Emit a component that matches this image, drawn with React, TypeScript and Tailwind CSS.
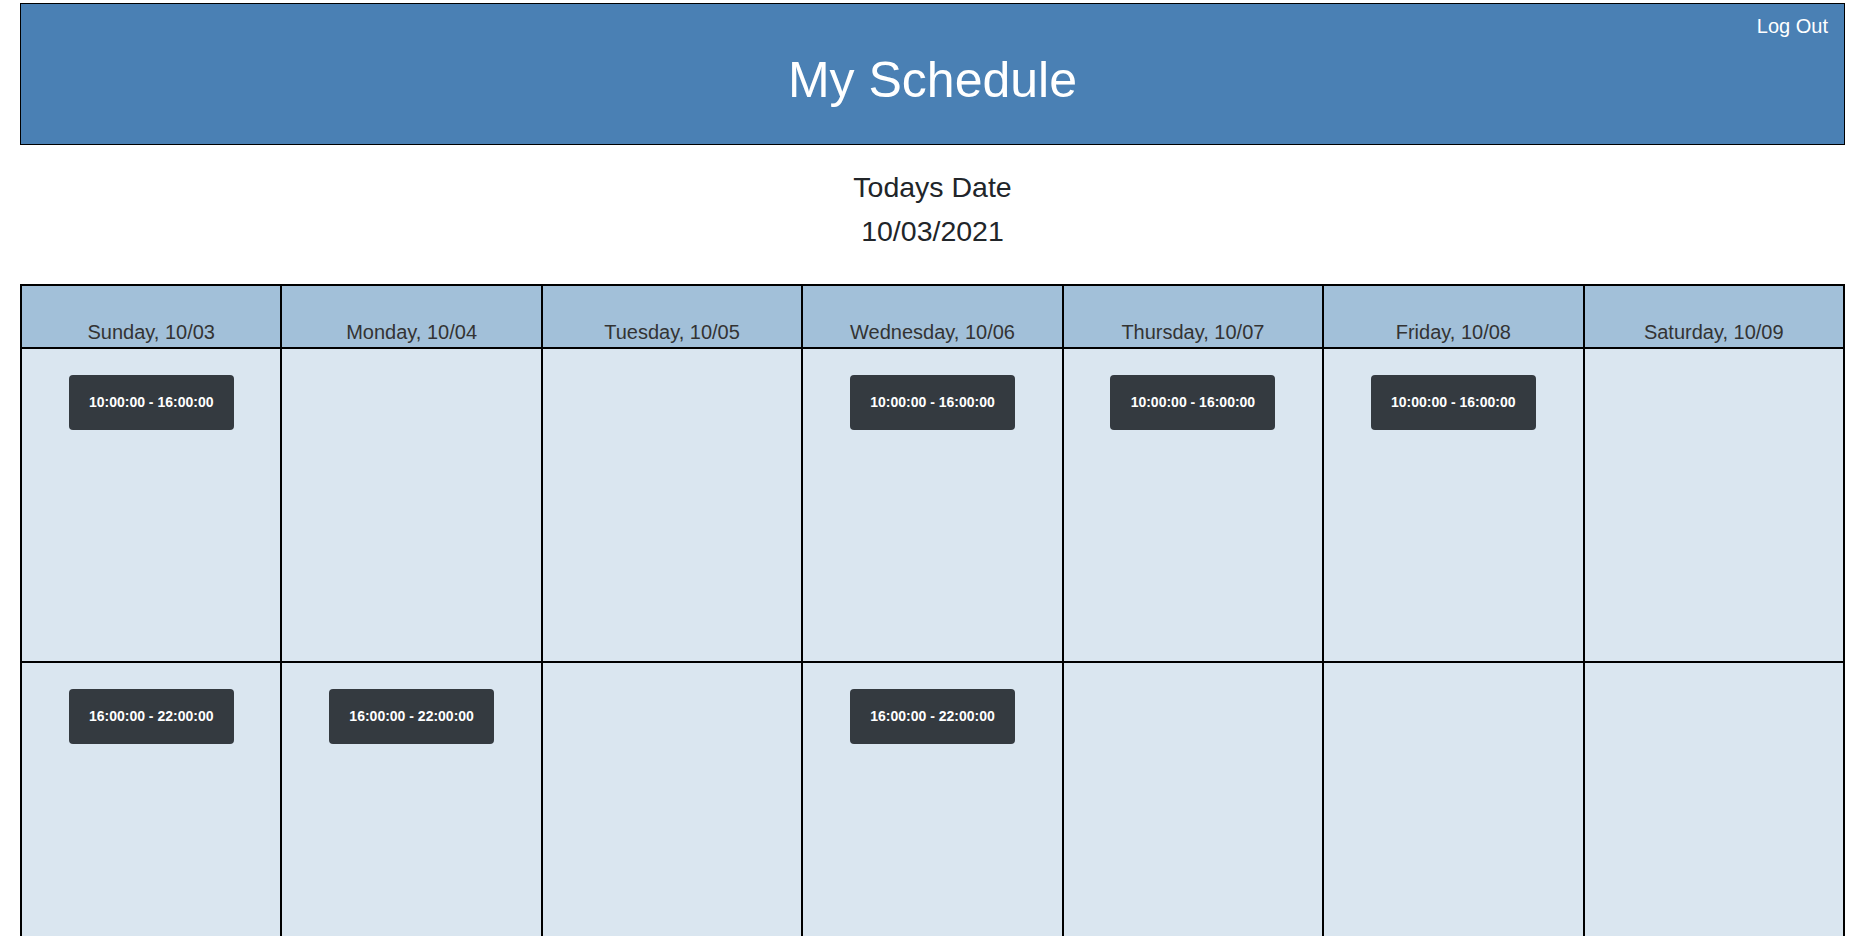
const days = [
  'Sunday, 10/03',
  'Monday, 10/04',
  'Tuesday, 10/05',
  'Wednesday, 10/06',
  'Thursday, 10/07',
  'Friday, 10/08',
  'Saturday, 10/09',
]

// shifts per row, indexed by day
const rows: (string | null)[][] = [
  ['10:00:00 - 16:00:00', null, null, '10:00:00 - 16:00:00', '10:00:00 - 16:00:00', '10:00:00 - 16:00:00', null],
  ['16:00:00 - 22:00:00', '16:00:00 - 22:00:00', null, '16:00:00 - 22:00:00', null, null, null],
]

export default function App() {
  return (
    <div className="min-h-screen bg-white pl-[20px] pr-[15px] pt-[3px] font-['Liberation_Sans',Arial,sans-serif]">
      {/* Cabeçalho */}
      <header className="relative flex h-[142px] items-center justify-center border border-black bg-[#4a80b4] pt-[12px]">
        <h1 className="text-[50px] leading-[58px] text-white">My Schedule</h1>
        <button className="absolute right-[16px] top-[11px] text-[20px] leading-[23px] text-white">Log Out</button>
      </header>

      <div className="mt-[20px] text-center text-[28.5px] leading-[44px] text-[#212529]">
        <p>Todays Date</p>
        <p>10/03/2021</p>
      </div>

      <table className="mt-[31px] w-full table-fixed border-collapse border-2 border-black">
        <thead>
          <tr>
            {days.map((d) => (
              <th
                key={d}
                className="h-[63px] border-2 border-black bg-[#a2c0d9] pb-[4px] align-bottom text-[20px] font-normal leading-[22px] text-[#333]"
              >
                {d}
              </th>
            ))}
          </tr>
        </thead>
        <tbody>
          {rows.map((row, i) => (
            <tr key={i}>
              {row.map((shift, j) => (
                <td key={j} className="h-[314px] border-2 border-black bg-[#dae6f0] pt-[26px] align-top">
                  {shift && (
                    <div className="flex justify-center">
                      <button className="flex h-[55px] w-[165px] items-center justify-center rounded-[4px] bg-[#343a40] text-[14px] font-bold text-white">
                        {shift}
                      </button>
                    </div>
                  )}
                </td>
              ))}
            </tr>
          ))}
        </tbody>
      </table>
    </div>
  )
}
